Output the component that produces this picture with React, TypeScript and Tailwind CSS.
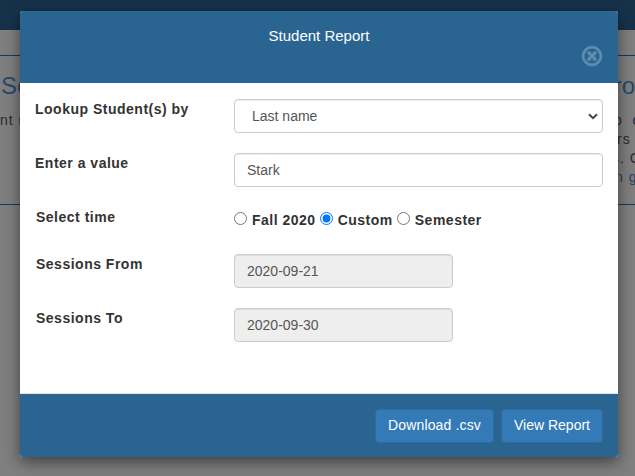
import React from 'react';

const labelClass = "text-[14px] leading-5 font-bold tracking-[0.5px] text-[#333]";
const inputClass = "h-[34px] rounded border border-[#ccc] px-3 text-[14px] text-[#555] shadow-[inset_0_1px_1px_rgba(0,0,0,0.075)]";
const buttonClass = "h-[34px] rounded border border-[#2e6da4] bg-[#337ab7] px-3 text-[14px] text-white";

const Row = ({ label, className, labelPad, children }: { label: string; className?: string; labelPad?: string; children: React.ReactNode }) => (
  <div className={`flex items-start ${className ?? ''}`}>
    <label className={`w-[199px] shrink-0 ${labelPad ?? 'pl-[1px]'} ${labelClass}`}>{label}</label>
    <div className="flex-1">{children}</div>
  </div>
);

const Radio = ({ label, checked }: { label: string; checked?: boolean }) => (
  <label className={`flex items-center gap-[5px] ${labelClass}`}>
    <input type="radio" name="time" defaultChecked={checked} className="m-0 h-[13px] w-[13px]" />
    <span className="pt-[3px]">{label}</span>
  </label>
);

export default function App() {
  return (
    <div className="relative h-[476px] w-[635px] overflow-hidden bg-[#7f7f7f] font-['Liberation_Sans',Arial,sans-serif]">
      {/* page behind the dialog */}
      <div className="h-[30px] bg-[#16324a]" />
      <div className="mt-[25px] h-[150px] border-y border-[#1c3a52]">
        <div className="flex justify-between pt-[12px] text-[24px] leading-9 text-[#234a6e]">
          <span className="ml-[1px]">Se</span>
          <span>ro</span>
        </div>
        <div className="mt-[7px] flex justify-between text-[14px] leading-[19px] tracking-[1px] text-[#2a2a2a]">
          <span>nt re</span>
          <div className="w-[17px] whitespace-nowrap">
            <div className="ml-[-4px]">p&nbsp; c</div>
            <div className="ml-[-1px]">rs</div>
            <div className="ml-[-6px]">s. C</div>
            <div className="ml-[-3px] text-[#1c4263]">n g</div>
          </div>
        </div>
      </div>

      <div className="absolute left-[20px] top-[11px] flex h-[446px] w-[598px] flex-col overflow-hidden rounded-[3px] bg-white shadow-[0_5px_15px_rgba(0,0,0,0.5)]">
        <div className="relative h-[72px] bg-[#2a6592] pt-[15px] text-center text-[15px] leading-5 text-white">
          Student Report
          <svg viewBox="0 0 24 24" className="absolute right-[15px] top-[34px] h-[22px] w-[22px] text-[#5c8db0]">
            <circle cx="12" cy="12" r="9.7" fill="none" stroke="currentColor" strokeWidth="3" />
            <path d="M8.5 8.5l7 7M15.5 8.5l-7 7" stroke="currentColor" strokeWidth="3.6" strokeLinecap="round" />
          </svg>
        </div>

        <div className="flex flex-1 flex-col px-[15px] pt-[16px]">
          <Row label="Lookup Student(s) by" labelPad="pl-0">
            <div className="relative">
              <select className={`${inputClass} w-full appearance-none bg-white pl-[17px]`} defaultValue="Last name">
                <option>Last name</option>
              </select>
              <svg viewBox="0 0 10 7" className="pointer-events-none absolute right-[5px] top-[14px] h-[7px] w-[10px] text-[#444]">
                <path d="M1 1.2l4 4 4-4" fill="none" stroke="currentColor" strokeWidth="2" />
              </svg>
            </div>
          </Row>
          <Row label="Enter a value" labelPad="pl-0" className="mt-[20px]">
            <input className={`${inputClass} w-full`} defaultValue="Stark" />
          </Row>
          <Row label="Select time" className="mt-[20px]">
            <div className="flex gap-[4px]">
              <Radio label="Fall 2020" />
              <Radio label="Custom" checked />
              <Radio label="Semester" />
            </div>
          </Row>
          <Row label="Sessions From" className="mt-[24px]">
            <input disabled className={`${inputClass} w-[219px] bg-[#eee]`} defaultValue="2020-09-21" />
          </Row>
          <Row label="Sessions To" className="mt-[20px]">
            <input disabled className={`${inputClass} w-[219px] bg-[#eee]`} defaultValue="2020-09-30" />
          </Row>
        </div>

        <div className="flex h-[64px] items-center justify-end gap-[7px] border-t border-[#e5e5e5] bg-[#2a6592] px-[15px]">
          <button className={`${buttonClass} tracking-[0.15px]`}>Download .csv</button>
          <button className={buttonClass}>View Report</button>
        </div>
      </div>
    </div>
  );
}
